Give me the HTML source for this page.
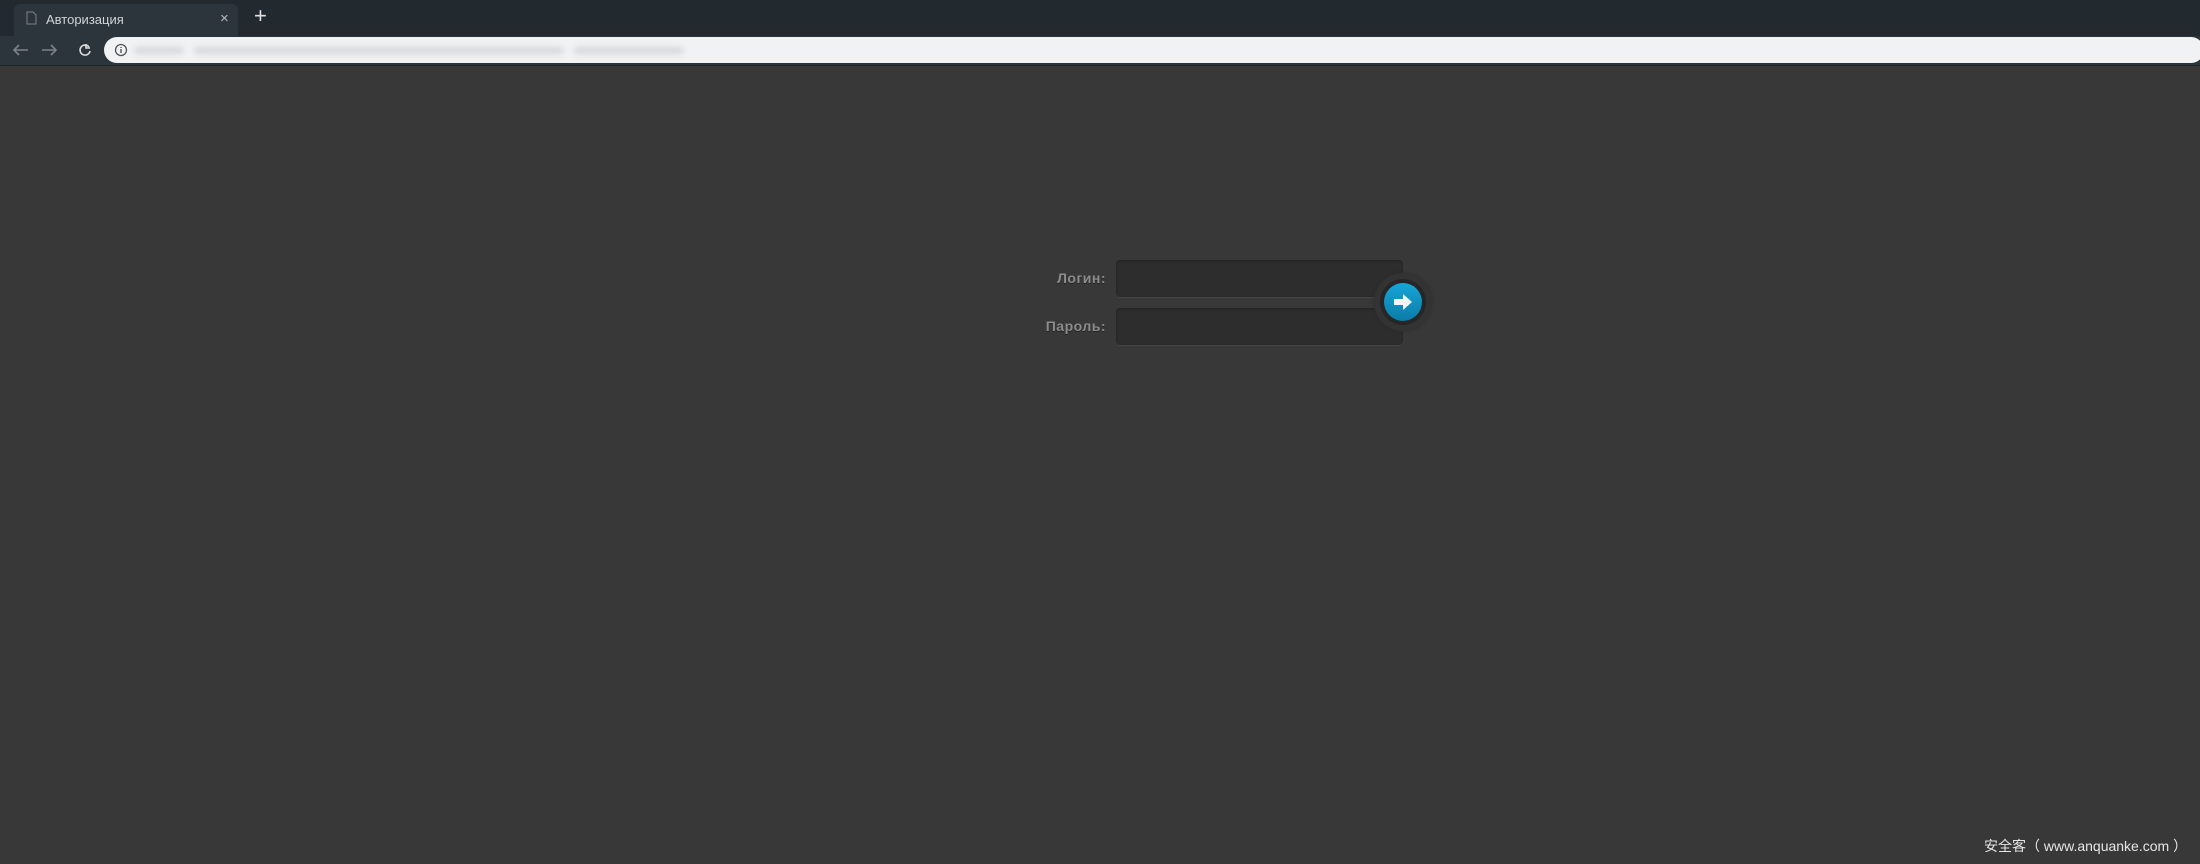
<!DOCTYPE html>
<html><head><meta charset="utf-8"><style>
*{margin:0;padding:0;box-sizing:border-box}
body{width:2200px;height:864px;background:#383838;overflow:hidden;font-family:"Liberation Sans",sans-serif;position:relative}
.tabbar{position:absolute;left:0;top:0;width:2200px;height:36px;background:#222a30}
.tab{position:absolute;left:14px;top:4px;width:224px;height:32px;background:#2c353b;border-radius:6px 6px 0 0;color:#d0d4d6;font-size:13px}
.toolbar{position:absolute;left:0;top:36px;width:2200px;height:30px;background:#2c353b;border-bottom:1px solid #1f2529}
.addr{position:absolute;left:104px;top:37px;width:2100px;height:26px;background:#f1f2f3;border-radius:13px}
.blur{position:absolute;top:10px;height:7px;background:#d6d8da;filter:blur(3px);border-radius:4px}
.lbl{position:absolute;color:#8c8c8c;font-size:14px;font-weight:bold;text-align:right;width:120px;text-shadow:0 1px 0 #222;letter-spacing:.5px}
.inp{position:absolute;left:1116px;width:287px;height:37px;background:#2d2d2d;border-radius:4px;box-shadow:inset 0 1px 2px #222,0 1px 0 #444}
</style></head><body>
<div class="tabbar">
 <div class="tab">
  <svg style="position:absolute;left:12px;top:7px" width="11" height="14"><path d="M1 1h6l3 3v9H1z" fill="none" stroke="#7d8488"/></svg>
  <span style="position:absolute;left:32px;top:8px">Авторизация</span>
  <span style="position:absolute;left:206px;top:6px;font-size:15px;color:#bbb">×</span>
 </div>
 <span style="position:absolute;left:254px;top:3px;color:#e0e0e0;font-size:22px">+</span>
</div>
<div class="toolbar">
 <svg style="position:absolute;left:12px;top:6px" width="90" height="16" fill="none" stroke-width="1.6">
  <path d="M16 8H2M7 3L2 8l5 5" stroke="#7c8387"/>
  <path d="M44 8H30M39 3l5 5-5 5" stroke="#7c8387"/>
  <path d="M77 5a5 5 0 1 0 1 4" stroke="#dcdcdc"/><path d="M74 2v4h4" stroke="#dcdcdc"/>
 </svg>
</div>
<div class="addr">
 <svg style="position:absolute;left:10px;top:6px" width="14" height="14"><circle cx="7" cy="7" r="5.5" fill="none" stroke="#555" stroke-width="1.3"/><path d="M7 6v4M7 4v1" stroke="#555" stroke-width="1.4"/></svg>
 <div class="blur" style="left:30px;width:50px"></div>
 <div class="blur" style="left:90px;width:370px"></div>
 <div class="blur" style="left:470px;width:110px"></div>
</div>
<div class="lbl" style="left:986px;top:270px">Логин:</div>
<div class="lbl" style="left:986px;top:318px">Пароль:</div>
<div class="inp" style="top:260px"></div>
<div class="inp" style="top:308px"></div>
<div style="position:absolute;left:1374px;top:273px;width:58px;height:58px;border-radius:50%;background:#333;box-shadow:0 0 3px #2c2c2c"></div>
<div style="position:absolute;left:1380px;top:279px;width:46px;height:46px;border-radius:50%;background:#262626"></div>
<div style="position:absolute;left:1384px;top:283px;width:38px;height:38px;border-radius:50%;background:linear-gradient(#17a6d8,#0b7ba6)">
 <svg width="38" height="38"><path d="M10 16h9v-5l9 8-9 8v-5h-9z" fill="#f4f4f4"/></svg>
</div>
<div style="position:absolute;left:1984px;top:836px;color:#e6e6e6;font-size:14px;font-family:'Liberation Sans','Noto Sans CJK SC',sans-serif">安全客（ www.anquanke.com ）</div>
</body></html>
